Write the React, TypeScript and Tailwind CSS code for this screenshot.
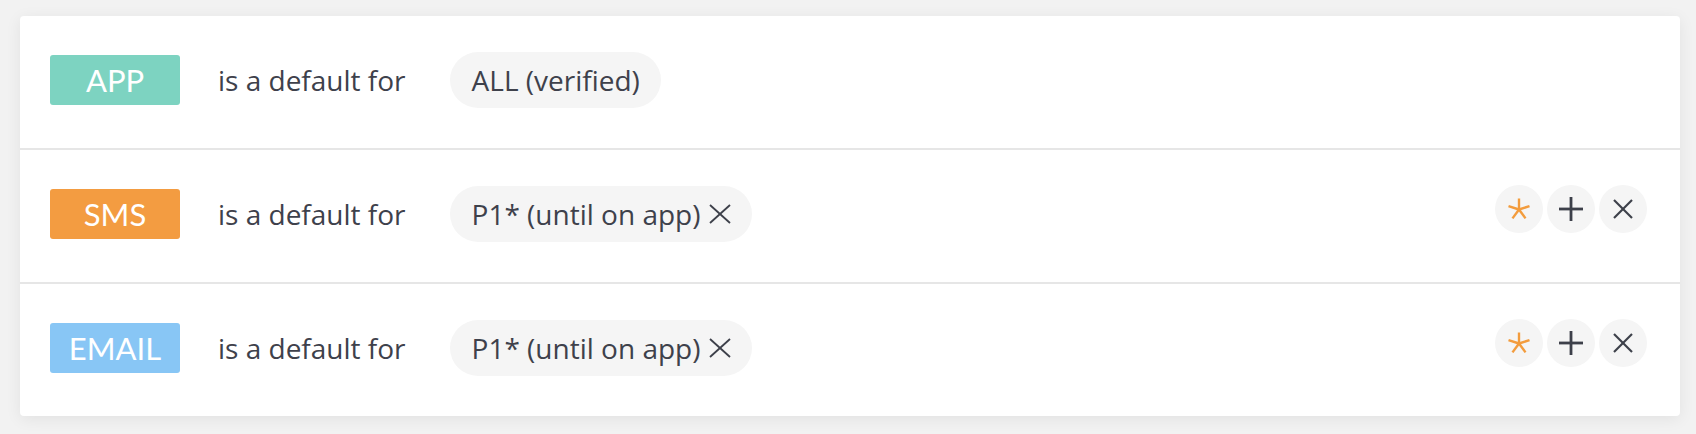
const ROWS = [
  { channel: 'APP', color: 'bg-[#7dd3c1]', scope: 'ALL (verified)', removable: false },
  { channel: 'SMS', color: 'bg-[#f39c41]', scope: 'P1* (until on app)', removable: true },
  { channel: 'EMAIL', color: 'bg-[#88c6f5]', scope: 'P1* (until on app)', removable: true },
];

function AsteriskIcon() {
  return (
    <svg width="24" height="24" viewBox="0 0 24 24" fill="none" stroke="#f39c3d" strokeWidth="2.4" aria-hidden="true">
      <line x1="12" y1="12.5" x2="12" y2="1.5" />
      <line x1="12" y1="12.5" x2="22.5" y2="9.1" />
      <line x1="12" y1="12.5" x2="18.5" y2="21.4" />
      <line x1="12" y1="12.5" x2="5.5" y2="21.4" />
      <line x1="12" y1="12.5" x2="1.5" y2="9.1" />
    </svg>
  );
}

function PlusIcon() {
  return (
    <svg width="24" height="24" viewBox="0 0 24 24" fill="none" stroke="#3d404a" strokeWidth="2.8" aria-hidden="true">
      <line x1="12" y1="0" x2="12" y2="24" />
      <line x1="0" y1="12" x2="24" y2="12" />
    </svg>
  );
}

function CrossIcon() {
  return (
    <svg width="20" height="20" viewBox="0 0 20 20" fill="none" stroke="#3d404a" strokeWidth="2.2" aria-hidden="true">
      <line x1="1" y1="1" x2="19" y2="19" />
      <line x1="19" y1="1" x2="1" y2="19" />
    </svg>
  );
}

function RoundButton({ children }: { children: React.ReactNode }) {
  return (
    <button className="flex h-12 w-12 items-center justify-center rounded-full bg-[#f5f5f5]">
      {children}
    </button>
  );
}

export default function App() {
  return (
    <div className="min-h-[434px] bg-[#f2f2f2] pb-[18px] pl-5 pr-4 pt-4 font-['Open_Sans',sans-serif]">
      <div className="rounded-[4px] bg-white shadow-[0_3px_16px_rgba(0,0,0,0.07)]">
        {ROWS.map((row) => (
          <div
            key={row.channel}
            className="flex items-center border-b-2 border-[#e6e6e6] pb-10 pl-[30px] pr-[33px] pt-9 last:border-b-0"
          >
            <span
              className={`flex h-[50px] w-[130px] items-center justify-center rounded-[3px] ${row.color} font-['Lato',sans-serif] text-[31px] leading-none text-white`}
            >
              {row.channel}
            </span>
            <span className="ml-[38px] text-[28px] leading-none text-[#3e414b]">is a default for</span>
            <span className="ml-[44px] flex h-14 items-center gap-[9px] rounded-full bg-[#f5f5f5] pl-[22px] pr-[21px] text-[28px] leading-none text-[#3e414b]">
              {row.scope}
              {row.removable ? (
                <svg width="22" height="20" viewBox="0 0 22 20" fill="none" stroke="#3d404a" strokeWidth="1.8" aria-hidden="true">
                  <line x1="1" y1="1" x2="21" y2="19" />
                  <line x1="21" y1="1" x2="1" y2="19" />
                </svg>
              ) : null}
            </span>
            {row.removable ? (
              <div className="ml-auto -mt-px flex gap-1 self-start">
                <RoundButton>
                  <AsteriskIcon />
                </RoundButton>
                <RoundButton>
                  <PlusIcon />
                </RoundButton>
                <RoundButton>
                  <CrossIcon />
                </RoundButton>
              </div>
            ) : null}
          </div>
        ))}
      </div>
    </div>
  );
}
